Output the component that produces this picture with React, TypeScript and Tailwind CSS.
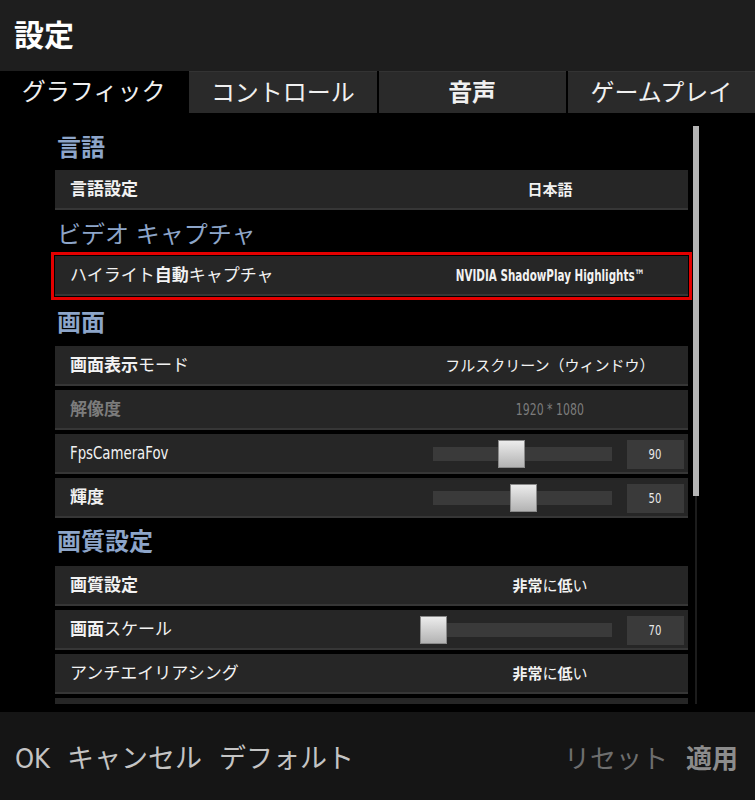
import React from "react"

type Item =
  | { kind: "heading"; label: string; h: string }
  | { kind: "value"; label: string; value: string; disabled?: boolean; highlight?: boolean; latin?: boolean }
  | { kind: "slider"; label: string; value: number; thumb: number }

const items: Item[] = [
  { kind: "heading", label: "言語", h: "h-[44px] mt-[13px]" },
  { kind: "value", label: "言語設定", value: "日本語" },
  { kind: "heading", label: "ビデオ キャプチャ", h: "h-[42px]" },
  { kind: "value", label: "ハイライト自動キャプチャ", value: "NVIDIA ShadowPlay Highlights™", highlight: true, latin: true },
  { kind: "heading", label: "画面", h: "h-[46px]" },
  { kind: "value", label: "画面表示モード", value: "フルスクリーン（ウィンドウ）" },
  { kind: "value", label: "解像度", value: "1920 * 1080", disabled: true, latin: true },
  { kind: "slider", label: "FpsCameraFov", value: 90, thumb: 65 },
  { kind: "slider", label: "輝度", value: 50, thumb: 77 },
  { kind: "heading", label: "画質設定", h: "h-[48px] -mt-[4px]" },
  { kind: "value", label: "画質設定", value: "非常に低い" },
  { kind: "slider", label: "画面スケール", value: 70, thumb: -13 },
  { kind: "value", label: "アンチエイリアシング", value: "非常に低い" },
  { kind: "value", label: "", value: "" },
]

// kanji come out heavier than kana in the game font, so split them
function Jp({ text }: { text: string }) {
  const parts = text.split(/([\u3400-\u9fff]+)/).filter(Boolean)
  return (
    <>
      {parts.map((p, i) =>
        /[\u3400-\u9fff]/.test(p) ? (
          <span key={i} className="font-bold">
            {p}
          </span>
        ) : (
          <span key={i}>{p}</span>
        ),
      )}
    </>
  )
}

// latin text in the game uses a narrow face
function Narrow({ children, scale }: { children: React.ReactNode; scale: string }) {
  return <span className={`inline-block whitespace-nowrap ${scale}`}>{children}</span>
}

function Row({ item }: { item: Item }) {
  if (item.kind === "heading") {
    return (
      <div className={`${item.h} shrink-0 flex items-center pl-[7px] text-[24px] text-[#8da5c9]`}>
        <Jp text={item.label} />
      </div>
    )
  }

  const disabled = item.kind === "value" && item.disabled
  const highlight = item.kind === "value" && item.highlight
  const latinLabel = /^[A-Za-z]/.test(item.label)

  return (
    <div
      className={`h-[40px] shrink-0 mx-[5px] mb-[4px] pt-[2px] flex items-center bg-[#262626] border-b-2 border-[#363636] ${
        highlight ? "outline-[3px] outline-solid outline-[#e40000] outline-offset-[1px]" : ""
      }`}
    >
      <div className={`flex-1 pl-[15px] text-[17px] ${disabled ? "text-[#7c7c7c]" : "text-[#f2f2f2]"}`}>
        {latinLabel ? (
          <Narrow scale="scale-x-[0.87] origin-left">{item.label}</Narrow>
        ) : (
          <Jp text={item.label} />
        )}
      </div>
      {item.kind === "value" ? (
        <div className={`w-[276px] text-center text-[15px] ${disabled ? "text-[#7c7c7c]" : "text-[#f2f2f2]"}`}>
          {item.latin ? (
            disabled ? (
              <Narrow scale="scale-x-[0.76] text-[16px]">{item.value}</Narrow>
            ) : (
              <Narrow scale="scale-x-[0.72] text-[16px] font-bold">{item.value}</Narrow>
            )
          ) : (
            <Jp text={item.value} />
          )}
        </div>
      ) : (
        <div className="w-[276px] flex items-center">
          <div className="ml-[21px] w-[179px] h-[14px] bg-[#3a3a3a] relative">
            <div
              className="absolute top-1/2 -translate-y-1/2 w-[27px] h-[28px] border border-[#8a8a8a] bg-linear-to-b from-[#ececec] to-[#b3b3b3]"
              style={{ left: item.thumb }}
            />
          </div>
          <div className="ml-[15px] w-[57px] h-[29px] bg-[#3a3a3a] flex items-center justify-center text-[14px] text-[#e8e8e8]">
            <Narrow scale="scale-x-[0.8]">{item.value}</Narrow>
          </div>
        </div>
      )}
    </div>
  )
}

const tabs = ["グラフィック", "コントロール", "音声", "ゲームプレイ"]

export default function App() {
  return (
    <div className="w-[755px] h-[800px] bg-black flex flex-col overflow-hidden font-['Liberation_Sans_Narrow','DejaVu_Sans_Condensed','Noto_Sans_CJK_JP',sans-serif] text-white">
      <header className="h-[71px] shrink-0 bg-[#1e1e1e] flex items-center pl-[14px] text-[30px] text-white">
        <Jp text="設定" />
      </header>

      <nav className="h-[42px] shrink-0 flex gap-[2px] bg-black">
        {tabs.map((t, i) => (
          <div
            key={t}
            className={`flex-1 flex items-center justify-center text-[24px] text-[#f0f0f0] ${
              i === 0 ? "bg-black" : "bg-[#2a2a2a] border-t border-[#333]"
            }`}
          >
            <Jp text={t} />
          </div>
        ))}
      </nav>

      <main className="flex-1 flex pl-[50px]">
        <div className="w-[643px] h-[591px] overflow-hidden flex flex-col">
          {items.map((item, i) => (
            <Row key={i} item={item} />
          ))}
        </div>
        <div className="mt-[13px] w-[6px] h-[578px] relative flex justify-center">
          <div className="w-[2px] h-full bg-[#1c1c1c]" />
          <div className="absolute top-0 left-0 w-[6px] h-[370px] bg-[#b4b4b4]" />
        </div>
      </main>

      <footer className="h-[88px] shrink-0 bg-[#151515] flex items-center justify-between pl-[15px] pr-[17px] pt-[7px]">
        <div className="flex items-center gap-[17px] text-[27px] text-[#c4c4c4]">
          <Narrow scale="">OK</Narrow>
          <span>キャンセル</span>
          <span>デフォルト</span>
        </div>
        <div className="flex gap-[18px] text-[26px]">
          <span className="text-[#6e6e6e]">リセット</span>
          <span className="text-[#8c8c8c] font-bold">適用</span>
        </div>
      </footer>
    </div>
  )
}
